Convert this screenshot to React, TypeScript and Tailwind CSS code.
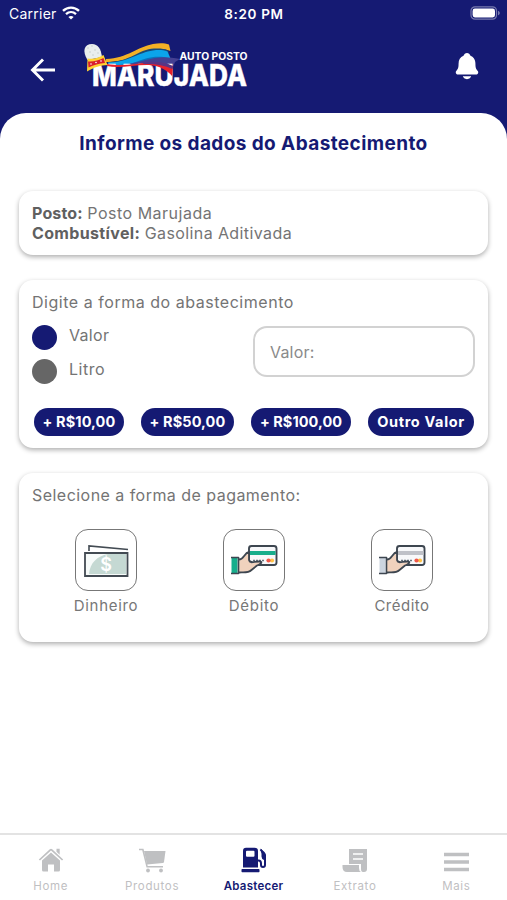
import React from "react";
import { IoNotifications } from "react-icons/io5";

const amounts = [
  { label: "+ R$10,00", box: "w-[90px]", text: "tracking-[0.1px]" },
  { label: "+ R$50,00", box: "w-[93px] ml-[17px]", text: "tracking-[0.1px]" },
  { label: "+ R$100,00", box: "w-[100px] ml-[17px]", text: "tracking-[0.05px]" },
  { label: "Outro Valor", box: "w-[106px] ml-[17px]", text: "tracking-[0.65px]" },
];

function StatusBar() {
  return (
    <div className="flex h-7 items-center text-white relative">
      <span className="ml-[9px] text-[14px] leading-7 tracking-[0.25px]">Carrier</span>
      <svg className="ml-[5px] -mt-[2px]" width="18" height="14" viewBox="0 0 18 14" fill="none" stroke="white">
        <path d="M1 4.9C5.6.5 12.4.5 17 4.9" strokeWidth="2.4" />
        <path d="M4 8.2c2.9-2.7 7.1-2.7 10 0" strokeWidth="2.3" />
        <path d="M9 13.6 6.4 10.9c1.5-1.3 3.7-1.3 5.2 0Z" fill="white" stroke="none" />
      </svg>
      <span className="absolute left-px right-0 text-center text-[13.5px] font-semibold tracking-[0.65px]">8:20 PM</span>
      <svg className="ml-auto mr-[6px] -mt-[2px]" width="31" height="14" viewBox="0 0 31 14">
        <rect x="1" y=".8" width="25.5" height="12.4" rx="4" fill="none" stroke="#777aae" strokeWidth="1.2" />
        <rect x="2.6" y="2.6" width="22.4" height="8.8" rx="2.3" fill="white" />
        <path d="M28 4.7c2.4 1 2.4 3.6 0 4.6Z" fill="#777aae" />
      </svg>
    </div>
  );
}

function Logo() {
  return (
    <svg className="overflow-visible" width="168" height="56" viewBox="0 0 168 56" fontFamily="Inter, sans-serif">
      <path d="M23 19C45 18 54 7 70 4c7-1.3 12-.8 16 .5l1.5 6.5C79 7 68 9 55 15c-11 5-21 7-32 7Z" fill="#f3b126" />
      <path d="M25 22C47 22 56 9 71 8.5c6-.3 10 0 14 2l1 3C72 11 56 19 46 22c-8 2-14 3-21 3Z" fill="#174a78" />
      <path d="M25 22.500C46 22 55 12.500 70 10.500c6-.8 10-.5 14.500 1l3.500 8c-13-3-25 1-37 5-9 2-17 2-25 .5Z" fill="#0ba4ea" />
      <path d="M50 23c13-5 22-8 36-5l1 3c-13-3-24 1-36 4Z" fill="#0874bd" />
      <path d="M26 24.500c19 2 31-4 46-6.500 9-1.400 16-.5 25 1l-5 3-2 5C75 21 50 24 28 26Z" fill="#454092" />
      <text x="9" y="46" textLength="155" lengthAdjust="spacingAndGlyphs" fontSize="30" fontWeight="800" fill="white" stroke="white" strokeWidth=".4">MARUJADA</text>
      <text x="96.500" y="19.500" textLength="68" lengthAdjust="spacingAndGlyphs" fontSize="10" fontWeight="700" fill="white">AUTO POSTO</text>
      <path d="M24 24c17 3 29-1 44-1.500 9-.2 16 1 22 4l-1 9.500c-5-6-12-10-23-11-15-.5-29 4-42 1Z" fill="#e6212c" />
      <path d="M60 22.500c11-1.500 21-.500 30 3.500l-.5 3c-9-4.500-19-5.500-29-5Z" fill="#5b3483" />
      <path d="M4.500 20C-1 11 1 4 9 4c6 0 9 5 10 13Z" fill="#e9eeed" />
      <g fill="#bdc7c8">
        <circle cx="5" cy="8" r=".7" /><circle cx="9" cy="6" r=".7" /><circle cx="12" cy="10" r=".7" />
        <circle cx="7" cy="12" r=".7" /><circle cx="15" cy="13" r=".7" /><circle cx="10" cy="15" r=".7" />
      </g>
      <path d="M4.500 18.500c6 1 11-.5 16-3.500l4 10c-7 .5-13 2-20.500 6.500Z" fill="#ffd233" />
      <path d="M5 21.500c5.500.5 10.500-1 15.500-3.500l1.500 5c-6 .5-11 2-16.500 4.500Z" fill="#d81f2e" />
      <g fill="#fff"><circle cx="8" cy="24" r=".8" /><circle cx="13" cy="22.500" r=".8" /><circle cx="18" cy="21" r=".8" /></g>
    </svg>
  );
}

function CashIcon() {
  return (
    <svg width="46" height="36" viewBox="0 0 46 36" fill="none">
      <path d="M6 9V4L45 7.500" stroke="#434b53" strokeWidth="1.600" />
      <path d="M2 11h42.500v23H2z" fill="#f7fbfa" />
      <path d="M6 32c1-11 8-18 19-20h18v20Z" fill="#c5d9d3" />
      <path d="M2 11h42.500v23H2z" stroke="#434b53" strokeWidth="1.800" />
      <text x="23" y="29" textAnchor="middle" fontFamily="Inter, sans-serif" fontSize="18" fontWeight="600" fill="white">$</text>
    </svg>
  );
}

function CardIcon({ color, sleeve }: any) {
  return (
    <svg width="48" height="34" viewBox="0 0 48 34" strokeLinejoin="round">
      <rect x="19" y="3" width="27.500" height="19" rx="2.500" fill="#f7f8fa" stroke="#3d4650" strokeWidth="1.900" />
      <path d="M20 8h25.600v4H20z" fill={color} />
      <path d="M23 17.500h11" stroke="#69727c" strokeWidth="1.400" strokeDasharray="2 1" />
      <circle cx="42" cy="17.500" r="2.100" fill="#ffc247" />
      <circle cx="38.500" cy="17.500" r="2.100" fill="#ef594b" />
      <path d="M9 17.500c5-1.500 6-6.500 10-7.500v7c1 3 3 4 6 2.500l5.500-1c2 1 0 3-3 4l-6 5.500c-4 3-8 1-12.500 2Z" fill="#f0d2bd" />
      <path d="M9 16.500c5 0 5-6.500 10-7.500v8c1 4 5 1.500 10 1.500 5 0 1 3-2 4l-5.500 4.500c-4 3.500-8 2-12.500 2.500" fill="none" stroke="#3d4650" strokeWidth="1.800" />
      <path d="M1.500 15h6v15h-6z" fill={sleeve} />
      <path d="M1 14.500h7.500v16H1" fill="none" stroke="#3d4650" strokeWidth="1.600" />
    </svg>
  );
}

function HomeIcon() {
  return (
    <svg width="26" height="24" viewBox="0 0 26 24" fill="currentColor">
      <path d="m13 4.500 9 8V22q0 1.500-1.500 1.500H16v-7h-6v7H5.500Q4 23.500 4 22v-9.500Z" />
      <path d="m.8 11.500 11-10.200q1.200-1 2.400 0l11 10.200-1.200 1-11-10-11 10Z" />
      <path d="M18.500.8h3.200v6l-3.200-3Z" />
    </svg>
  );
}

function CartIcon() {
  return (
    <svg width="28" height="25" viewBox="0 0 28 25" fill="currentColor">
      <path d="M6 3h21.500l-1.500 11q-.2 1-1.200 1.100L9 16.500Z" />
      <path d="M1 .7h4.500L9.700 18H25v1.500H8.500L4.200 2.200H1Z" />
      <circle cx="10" cy="22.500" r="1.900" /><circle cx="23" cy="22.500" r="1.900" />
    </svg>
  );
}

function PumpIcon() {
  return (
    <svg width="26" height="26" viewBox="0 0 26 26" fill="currentColor">
      <path fillRule="evenodd" d="M5 .7h8.500Q17 .7 17 4v16.500H2V4Q2 .7 5 .7Zm1 3q-1 0-1 1v4q0 1 1 1h6.500q1 0 1-1v-4q0-1-1-1Z" />
      <rect x=".5" y="22" width="18" height="3.200" rx=".7" />
      <path d="M16 13.500h1.500q2.500 0 2.500 3V18q0 2 2 2t2-2V8.500L19.500 2.500" fill="none" stroke="currentColor" strokeWidth="2" />
      <path d="m19.500 1.500 4 3.500q1.500 1.500 1.500 3.500v4.500h-2q-2.500-1-2.500-3.500V7Z" />
    </svg>
  );
}

function ReceiptIcon() {
  return (
    <svg width="26" height="25" viewBox="0 0 26 25" fill="currentColor">
      <path d="M7 1h18v20q0 3-3 3h-1q-2 0-2-3v-5H7Z" />
      <path d="M.5 17H17v3q0 3 2 4H5q-4.500 0-4.500-5Z" />
      <path d="M11 6h10M11 11h10" stroke="white" strokeWidth="1.600" />
    </svg>
  );
}

function MenuIcon() {
  return (
    <svg className="translate-y-[2px]" width="25" height="20" viewBox="0 0 25 20" stroke="currentColor" strokeWidth="3.300">
      <path d="M0 2.500h25M0 10h25M0 17.500h25" />
    </svg>
  );
}

const payments = [
  { label: "Dinheiro", tracking: "tracking-[0.7px]", icon: <CashIcon /> },
  { label: "Débito", tracking: "tracking-[0.7px]", icon: <CardIcon color="#17ae8c" sleeve="#17ae8c" /> },
  { label: "Crédito", tracking: "tracking-[0.5px]", icon: <CardIcon color="#bfc1c8" sleeve="#ccd5df" /> },
];

const tabs = [
  { label: "Home", icon: <HomeIcon /> },
  { label: "Produtos", icon: <CartIcon /> },
  { label: "Abastecer", icon: <PumpIcon />, active: true },
  { label: "Extrato", icon: <ReceiptIcon /> },
  { label: "Mais", icon: <MenuIcon /> },
];

const cardClass = "mx-[19px] rounded-[14px] bg-white shadow-[0_2px_5px_rgba(0,0,0,0.32)]";

export default function App() {
  return (
    <div className="flex h-[900px] w-[507px] flex-col overflow-hidden bg-[#151a73] font-['Inter',sans-serif] text-[#747474]">
      <StatusBar />
      <header className="flex h-[85px] items-start">
        <svg className="ml-[30px] mt-[30px]" width="26" height="24" viewBox="0 0 26 24" fill="none" stroke="white" strokeWidth="2.900">
          <path d="M25 12H2.500M13 1.500 2.500 12 13 22.500" />
        </svg>
        <div className="ml-[27px] mt-[12px]"><Logo /></div>
        <IoNotifications className="ml-auto mr-[25px] mt-[23px] text-white" size={30} />
      </header>

      <main className="flex-1 rounded-t-[26px] bg-white">
        <h1 className="h-[78px] pt-[21px] text-center text-[19px] leading-5 font-bold tracking-[0.4px] text-[#151a73]">Informe os dados do Abastecimento</h1>

        <section className={`${cardClass} h-16 px-[13px] pt-[12px] text-[16px] leading-[20px]`}>
          <p><b className="tracking-[0.15px] text-[#606060]">Posto:</b> <span className="tracking-[0.5px]">Posto Marujada</span></p>
          <p><b className="tracking-[0.35px] text-[#606060]">Combustível:</b> <span className="tracking-[0.4px]">Gasolina Aditivada</span></p>
        </section>

        <section className={`${cardClass} mt-[25px] h-[168px] px-[13px] pt-[12px]`}>
          <p className="text-[16px] leading-5 tracking-[0.53px]">Digite a forma do abastecimento</p>
          <div className="mt-[13px] flex">
            <div className="w-[223px]">
              <div className="flex h-[34px]">
                <span className="h-[25px] w-[25px] rounded-full bg-[#151a73]" />
                <span className="ml-3 text-[16px] leading-5 tracking-[0.3px]">Valor</span>
              </div>
              <div className="flex">
                <span className="h-[25px] w-[25px] rounded-full bg-[#666]" />
                <span className="ml-3 text-[16px] leading-5 tracking-[0.5px]">Litro</span>
              </div>
            </div>
            <div className="mt-px flex h-[51px] w-[222px] shrink-0 items-center rounded-[14px] border-2 border-[#d2d2d2] pl-[15px] text-[16px] tracking-[0.2px] text-[#8a8a8a]">Valor:</div>
          </div>
          <div className="mt-[24px] ml-[2px] flex">
            {amounts.map(a => (
              <button key={a.label} className={`h-7 shrink-0 rounded-full bg-[#151a73] text-[14.5px] font-bold whitespace-nowrap text-white ${a.box} ${a.text}`}>{a.label}</button>
            ))}
          </div>
        </section>

        <section className={`${cardClass} mt-[25px] h-[169px] pt-[12px]`}>
          <p className="pl-[13px] text-[16px] leading-5 tracking-[0.46px]">Selecione a forma de pagamento:</p>
          <div className="mt-6 ml-[13px] flex">
            {payments.map(p => (
              <div key={p.label} className="flex w-[148px] flex-col items-center">
                <div className="flex h-[62px] w-[62px] items-center justify-center rounded-[13px] border border-[#777]">{p.icon}</div>
                <span className={`mt-[5px] text-[15px] leading-5 text-[#777] ${p.tracking}`}>{p.label}</span>
              </div>
            ))}
          </div>
        </section>
      </main>

      <nav className="flex h-[67px] border-t-2 border-[#e3e3e3] bg-white">
        {tabs.map(t => (
          <div key={t.label} className={`flex flex-1 flex-col items-center pt-3 ${t.active ? "text-[#151a73]" : "text-[#bfc0c2]"}`}>
            <div className="flex h-[26px] items-center">{t.icon}</div>
            <span className={`mt-[6px] text-[11.5px] leading-[15px] ${t.active ? "font-semibold tracking-[0.25px]" : "font-normal tracking-[0.65px]"}`}>{t.label}</span>
          </div>
        ))}
      </nav>
    </div>
  );
}
